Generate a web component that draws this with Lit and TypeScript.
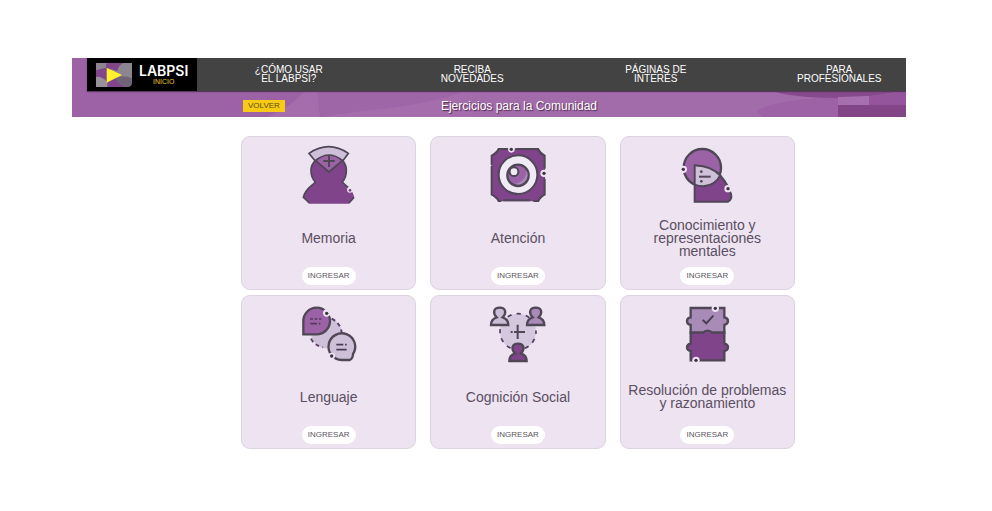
import { LitElement, html, css, svg, type TemplateResult } from "lit";
import { customElement, property } from "lit/decorators.js";

type IconName = "memoria" | "atencion" | "conocimiento" | "lenguaje" | "social" | "problemas";

const INK = "#4f4656";
const DEEP = "#7f4489";
const MID = "#9c62a6";
const SOFT = "#a98bb8";
const PALE = "#cfc0da";
const CARD = "#ede3f1";

const ICONS: Record<IconName, { box: string; art: TemplateResult }> = {
  memoria: {
    box: "-4 0 240 222",
    art: svg`
      <path d="M56 46Q115 6 174 46L158 68Q115 40 74 68Z" fill=${PALE} stroke=${INK} stroke-width="5"/>
      <path d="M62 98A53 46 0 0 1 168 98Q168 118 156 132C166 144 186 150 192 178L176 197H57L39 178C46 150 66 144 75 132Q62 118 62 98Z" fill=${DEEP}/>
      <path d="M75 68Q62 80 62 98Q62 118 75 132C66 144 46 150 39 178L57 195M157 68Q168 80 168 98Q168 118 156 132C162 140 168 144 175 149M191 178L176 195" fill="none" stroke=${INK} stroke-width="5"/>
      <path d="M76 68Q116 34 156 68L116 102Z" fill=${MID} stroke=${INK} stroke-width="5" stroke-linejoin="round"/>
      <path d="M116 51V87M99 69H133" stroke=${INK} stroke-width="6"/>
      <circle cx="179" cy="155" r="9" fill=${CARD}/><circle cx="179" cy="157" r="4" fill="#733e7c"/>`,
  },
  atencion: {
    box: "0 0 240 222",
    art: svg`
      <path d="M62 32H180L201 52V170L181 190H62L40 170V52Z" fill=${DEEP}/>
      <path d="M90 33H62Q56 47 41 53V80M112 33H180Q186 47 200 53V92M200 122V170Q186 176 181 189H166M156 187H76M70 189H62Q56 176 41 170V84" fill="none" stroke=${INK} stroke-width="6"/>
      <circle cx="120" cy="110" r="58" fill="#f0eaf4" stroke=${INK} stroke-width="6"/>
      <circle cx="120" cy="112" r="32" fill=${MID} stroke=${INK} stroke-width="7"/>
      <path d="M112 138A29 29 0 0 0 146 98Q146 128 112 138Z" fill=${SOFT}/>
      <circle cx="108" cy="101" r="13" fill="#f0eaf4" stroke=${INK} stroke-width="6"/>
      <circle cx="100" cy="34" r="10" fill=${CARD}/><circle cx="100" cy="34" r="5" fill="#3e3145"/>
      <circle cx="198" cy="106" r="11" fill=${CARD}/><circle cx="198" cy="106" r="5" fill="#3e3145"/>`,
  },
  conocimiento: {
    box: "-3 0 240 222",
    art: svg`
      <circle cx="103" cy="89" r="56" fill=${MID} stroke=${INK} stroke-width="7"/>
      <path d="M80 82Q132 82 158 114Q180 140 190 172Q194 184 182 191H80Z" fill=${DEEP}/>
      <path d="M80 84Q128 84 155 111Q140 143 104 145Q90 145 80 141Z" fill=${PALE}/>
      <path d="M80 82Q132 84 158 114Q180 140 189 168Q193 184 180 191H80ZM158 110Q142 143 106 145Q92 145 80 140" fill="none" stroke=${INK} stroke-width="6"/>
      <path d="M93 116H128" stroke=${INK} stroke-width="6"/>
      <circle cx="100" cy="101" r="4" fill=${INK}/><circle cx="100" cy="130" r="4" fill=${INK}/>
      <circle cx="46" cy="94" r="11" fill=${CARD}/><circle cx="46" cy="94" r="5" fill="#3e3145"/>
      <circle cx="180" cy="152" r="11" fill=${CARD}/><circle cx="180" cy="152" r="5" fill="#3e3145"/>`,
  },
  lenguaje: {
    box: "-4 -3 240 222",
    art: svg`
      <circle cx="108" cy="105" r="46" fill=${PALE}/>
      <path d="M124 62Q154 78 154 108M62 122Q72 142 98 148" fill="none" stroke="#594064" stroke-width="6" stroke-dasharray="12 10"/>
      <path d="M39 109V70A40 40 0 1 1 78 109Z" fill=${MID} stroke=${INK} stroke-width="7"/>
      <path d="M59 63H68M73 63H81M86 63H93M60 77H80M85 77H90" stroke="#543b5e" stroke-width="5"/>
      <path d="M154 186A40 40 0 1 1 188 168Q188 182 178 186Z" fill=${PALE} stroke=${INK} stroke-width="7"/>
      <path d="M138 140H159M164 140H169M138 155H169" stroke="#4a3d52" stroke-width="5"/>
      <circle cx="109" cy="45" r="11" fill=${CARD}/><circle cx="109" cy="46" r="5" fill="#3e3145"/>
      <circle cx="124" cy="174" r="10" fill=${CARD}/><circle cx="124" cy="174" r="5" fill="#3e3145"/>`,
  },
  social: {
    box: "0 -3 240 222",
    art: svg`
      <circle cx="120" cy="101" r="54" fill="#d4c8df" stroke="#523d5e" stroke-width="5" stroke-dasharray="13 15.27" stroke-dashoffset="6"/>
      ${[
        [65, 29, "#c9bcd5"],
        [173, 29, SOFT],
        [120, 137, DEEP],
      ].map(
        ([x, y, tone]) => svg`<g transform="translate(${x} ${y})">
          <path d="M-9 29C-22 16-18 0 0 0S22 16 9 29C20 33 26 39 26 52H-26C-26 39-20 33-9 29Z" fill=${tone} stroke=${INK} stroke-width="7"/>
        </g>`,
      )}
      <path d="M119 80V123M108 102H141M98 102H104" stroke=${INK} stroke-width="6"/>`,
  },
  problemas: {
    box: "-3 -3 240 222",
    art: svg`
      <path d="M68 30H169V58Q180 60 180 69T169 81V104H68V81Q57 79 57 69T68 58Z" fill=${SOFT} stroke=${INK} stroke-width="7"/>
      <path d="M68 104H106Q110 98 119 98T132 104H169V137Q180 139 180 148T169 159V187H68V159Q57 157 57 148T68 137Z" fill=${DEEP} stroke=${INK} stroke-width="7"/>
      <path d="M104 66L115 76L136 53" fill="none" stroke="#4a3d52" stroke-width="6"/>
      <circle cx="142" cy="31" r="11" fill=${CARD}/><circle cx="142" cy="31" r="5" fill="#3e3145"/>
      <circle cx="84" cy="187" r="11" fill=${CARD}/><circle cx="84" cy="187" r="5" fill="#3e3145"/>`,
  },
};

@customElement("exercise-card")
export class ExerciseCard extends LitElement {
  @property() icon: IconName = "memoria";
  @property() heading = "";

  static styles = css`
    :host {
      display: flex;
      flex-direction: column;
      align-items: center;
      box-sizing: border-box;
      padding: 1px 4px 4px;
      border: 1px solid #dcd3e0;
      border-radius: 9px;
      background: #ede3f1;
    }
    .icon {
      display: block;
      width: 80px;
      height: 74px;
    }
    .heading {
      display: flex;
      align-items: center;
      min-height: 52px;
      margin: 0 0 3px;
      font-size: 14px;
      font-weight: 400;
      line-height: 13px;
      text-align: center;
      color: #5b4f61;
    }
    .enter {
      height: 18px;
      padding: 0 6px;
      border: 0;
      border-radius: 9px;
      background: #fff;
      font: 8px/18px "Liberation Sans", Arial, sans-serif;
      color: #5c5560;
      cursor: pointer;
    }
  `;

  render() {
    const { box, art } = ICONS[this.icon];
    return html`
      <svg class="icon" viewBox=${box} aria-hidden="true">${art}</svg>
      <h2 class="heading">${this.heading}</h2>
      <button class="enter" type="button">INGRESAR</button>
    `;
  }
}

const LINKS = [
  "¿CÓMO USAR\nEL LABPSI?",
  "RECIBA\nNOVEDADES",
  "PÁGINAS DE\nINTERÉS",
  "PARA\nPROFESIONALES",
];

const CARDS: [IconName, string][] = [
  ["memoria", "Memoria"],
  ["atencion", "Atención"],
  ["conocimiento", "Conocimiento y representaciones mentales"],
  ["lenguaje", "Lenguaje"],
  ["social", "Cognición Social"],
  ["problemas", "Resolución de problemas y razonamiento"],
];

@customElement("app-root")
export class AppRoot extends LitElement {
  static styles = css`
    :host {
      display: block;
      box-sizing: border-box;
      min-height: 100vh;
      padding: 58px 86px 60px 72px;
      background: #fff;
      font-family: "Liberation Sans", Arial, sans-serif;
    }
    .banner {
      position: relative;
      overflow: hidden;
      background: #a26ba9;
    }
    .backdrop {
      position: absolute;
      inset: 0;
      width: 100%;
      height: 100%;
    }
    .bar {
      position: relative;
      display: flex;
      height: 33px;
      margin-left: 15px;
      background: #434343;
      box-shadow: 0 1px 1px #58385c;
    }
    .brand {
      display: flex;
      align-items: center;
      gap: 7px;
      box-sizing: border-box;
      flex: 0 0 110px;
      padding-left: 9px;
      background: #000;
      text-decoration: none;
    }
    .mark {
      width: 36px;
      height: 24px;
    }
    .words {
      display: flex;
      flex-direction: column;
      align-items: center;
    }
    .name {
      font: 600 14px/13px Inter, sans-serif;
      color: #fff;
    }
    .home {
      font-size: 7px;
      line-height: 9px;
      color: #e9c832;
    }
    .links {
      display: grid;
      grid-template-columns: repeat(4, 1fr);
      align-items: center;
      flex: 1;
      margin-right: -25px;
      padding-bottom: 2px;
    }
    .link {
      font-size: 10px;
      line-height: 9px;
      text-align: center;
      text-decoration: none;
      white-space: pre-line;
      color: #fff;
    }
    .sub {
      position: relative;
      display: grid;
      grid-template-columns: 1fr auto 1fr;
      align-items: center;
      height: 26px;
      padding: 4px 111px 0 171px;
      box-sizing: border-box;
    }
    .back {
      justify-self: start;
      height: 12px;
      padding: 0 5px;
      border: 0;
      background: #f7cb15;
      font: 8px/12px "Liberation Sans", Arial, sans-serif;
      color: #5f4d18;
      cursor: pointer;
    }
    .title {
      margin: 0;
      font-size: 12px;
      font-weight: 400;
      line-height: 14px;
      color: #fff;
      text-shadow: 1px 1px 1px #4b2a50;
    }
    .cards {
      display: grid;
      grid-template-columns: repeat(3, 1fr);
      gap: 5px 14px;
      padding: 19px 111px 0 169px;
    }
  `;

  render() {
    return html`
      <header class="banner">
        <svg class="backdrop" viewBox="0 0 834 59" preserveAspectRatio="none" aria-hidden="true">
          <path d="M0 0H420Q340 40 220 59H0Z" fill="#9d62a5" />
          <path d="M195 59Q222 47 232 33H400V59Z" fill="#a56dab" />
          <path d="M245 33H395Q350 48 290 53L248 59Z" fill="#9f66a7" />
          <ellipse cx="765" cy="30" rx="67" ry="10" fill="#894a91" />
          <path d="M685 53Q705 41 767 39L834 33V59H690Z" fill="#9d61a6" />
          <path d="M703 33Q765 47 828 33Z" fill="#87498f" />
          <path d="M766 39L797 38V47H766Z" fill="#a66faf" />
          <path d="M797 38L834 33V47H797Z" fill="#95559d" />
          <path d="M766 47H834V59H766Z" fill="#824687" />
        </svg>
        <nav class="bar">
          <a class="brand" href="#inicio">
            <svg class="mark" viewBox="0 0 108 72" aria-hidden="true">
              <path d="M0 0H108V56Q108 72 92 72H0Z" fill="#8d8590" />
              <path d="M0 0H30L84 72H34Q12 58 0 42Z" fill="#82448b" />
              <path d="M0 0H30V14L0 22Z" fill="#8d8590" />
              <path d="M0 42Q14 38 34 56V72H0Z" fill="#97929a" />
              <path d="M34 0H82Q66 8 64 24L34 14Z" fill="#81458a" />
              <path d="M58 44Q82 34 108 46V56Q108 72 92 72H86Q66 64 58 44Z" fill="#716477" />
              <path d="M32 14L78 36L32 59Z" fill="#fff12d" />
            </svg>
            <span class="words">
              <span class="name">LABPSI</span>
              <span class="home">INICIO</span>
            </span>
          </a>
          <div class="links">
            ${LINKS.map((label) => html`<a class="link" href="#">${label}</a>`)}
          </div>
        </nav>
        <div class="sub">
          <button class="back" type="button">VOLVER</button>
          <h1 class="title">Ejercicios para la Comunidad</h1>
        </div>
      </header>
      <main class="cards">
        ${CARDS.map(
          ([icon, heading]) => html`<exercise-card .icon=${icon} .heading=${heading}></exercise-card>`,
        )}
      </main>
    `;
  }
}
